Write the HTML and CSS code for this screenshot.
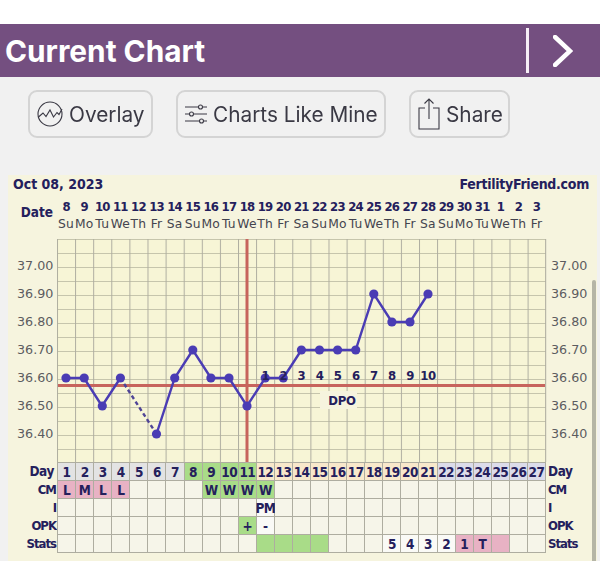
FILE: index.html
```html
<!DOCTYPE html>
<html lang="en">
<head>
<meta charset="utf-8">
<title>Current Chart</title>
<link rel="stylesheet" href="styles.css">
</head>
<body>
<div class="status"></div>
<header class="header">
  <h1 class="title">Current Chart</h1>
  <div class="divider"></div>
  <svg class="chevron" width="20" height="32" viewBox="0 0 20 32"><path d="M2 2 L17 16 L2 30"/></svg>
</header>
<nav class="toolbar">
  <button class="btn btn-overlay">
    <svg class="icon" width="26" height="28" viewBox="0 0 26 28"><circle cx="13" cy="14" r="12"/><path d="M1.5 17 L6 13 L9 16.5 L13 10 L16.5 17 L20 12.5 L22 14.5 L25 9"/></svg>
    Overlay
  </button>
  <button class="btn btn-charts">
    <svg class="icon" width="24" height="24" viewBox="0 0 24 24"><path d="M1 5 H14 M19 5 H23 M1 12 H5 M10 12 H23 M1 19 H15 M20 19 H23"/><circle cx="16.500" cy="5" r="2"/><circle cx="7.500" cy="12" r="2"/><circle cx="17.500" cy="19" r="2"/></svg>
    Charts Like Mine
  </button>
  <button class="btn btn-share">
    <svg class="icon" width="22" height="32" viewBox="0 0 22 32"><path d="M7 10 H1 V31 H21 V10 H15 M11 21 V1 M6.500 5.500 L11 1 L15.500 5.500"/></svg>
    Share
  </button>
</nav>
<main class="panel">
  <div class="panel-top"><span>Oct 08, 2023</span><span class="site">FertilityFriend.com</span></div>
  <div class="dates">
    <div class="date-label">Date</div>
    <b>8</b><b>9</b><b>10</b><b>11</b><b>12</b><b>13</b><b>14</b><b>15</b><b>16</b><b>17</b><b>18</b><b>19</b><b>20</b><b>21</b><b>22</b><b>23</b><b>24</b><b>25</b><b>26</b><b>27</b><b>28</b><b>29</b><b>30</b><b>31</b><b>1</b><b>2</b><b>3</b>
    <i>Su</i><i>Mo</i><i>Tu</i><i>We</i><i>Th</i><i>Fr</i><i>Sa</i><i>Su</i><i>Mo</i><i>Tu</i><i>We</i><i>Th</i><i>Fr</i><i>Sa</i><i>Su</i><i>Mo</i><i>Tu</i><i>We</i><i>Th</i><i>Fr</i><i>Sa</i><i>Su</i><i>Mo</i><i>Tu</i><i>We</i><i>Th</i><i>Fr</i>
  </div>
  <svg class="plot" width="589" height="223" viewBox="8 239 589 223">
    <defs>
      <pattern id="cellgrid" x="57" y="239" width="18.1" height="14" patternUnits="userSpaceOnUse">
        <path class="gridline-h" d="M0 0.500 H18.100"/>
        <path class="gridline" d="M0.500 0 V14"/>
      </pattern>
    </defs>
    <rect class="plot-bg" x="57" y="239" width="489" height="223"/>
    <rect x="57" y="239" width="489" height="223" fill="url(#cellgrid)"/>
    <path class="gridline" d="M545.700 239 V462"/>
    <g class="axis">
      <text x="17" y="270">37.00</text><text x="17" y="298">36.90</text><text x="17" y="326">36.80</text><text x="17" y="354">36.70</text><text x="17" y="382">36.60</text><text x="17" y="410">36.50</text><text x="17" y="438">36.40</text>
      <text x="551" y="270">37.00</text><text x="551" y="298">36.90</text><text x="551" y="326">36.80</text><text x="551" y="354">36.70</text><text x="551" y="382">36.60</text><text x="551" y="410">36.50</text><text x="551" y="438">36.40</text>
    </g>
    <path class="redline" d="M58 385.500 H545 M247 239 V462"/>
    <path class="temp" d="M66 378 H84 L102 406 L120.400 378"/>
    <path class="temp" d="M156.500 434 L174.700 378 L192.800 350 L210.900 378 H229 L247 406 L265.200 378 H283.300 L301.400 350 H355.700 L373.800 294 L391.900 322 H410 L428 294"/>
    <path class="temp-dash" d="M120.400 378 L156.500 434"/>
    <g class="dots">
      <circle cx="66" cy="378"/><circle cx="84.200" cy="378"/><circle cx="102.300" cy="406"/><circle cx="120.400" cy="378"/><circle cx="156.500" cy="434"/><circle cx="174.700" cy="378"/><circle cx="192.800" cy="350"/><circle cx="210.900" cy="378"/><circle cx="229" cy="378"/><circle cx="247" cy="406"/><circle cx="265.200" cy="378"/><circle cx="283.300" cy="378"/><circle cx="301.400" cy="350"/><circle cx="319.500" cy="350"/><circle cx="337.600" cy="350"/><circle cx="355.700" cy="350"/><circle cx="373.800" cy="294"/><circle cx="391.900" cy="322"/><circle cx="410" cy="322"/><circle cx="428" cy="294"/>
    </g>
    <g class="dpo">
      <text x="265.200" y="380">1</text><text x="283.300" y="380">2</text><text x="301.400" y="380">3</text><text x="319.500" y="380">4</text><text x="337.600" y="380">5</text><text x="355.700" y="380">6</text><text x="373.800" y="380">7</text><text x="391.900" y="380">8</text><text x="410" y="380">9</text><text x="428" y="380">10</text>
    </g>
    <rect class="dpo-box" x="320" y="391" width="37" height="18"/>
    <text class="dpo-label" x="342" y="405">DPO</text>
  </svg>
  <div class="table">
    <div class="labels labels-left"><span class="lab-day">Day</span><span>CM</span><span>I</span><span>OPK</span><span>Stats</span></div>
    <div class="cells">
      <div class="grey">1</div><div class="grey">2</div><div class="grey">3</div><div class="grey">4</div><div class="grey">5</div><div class="grey">6</div><div class="grey">7</div><div class="green">8</div><div class="green">9</div><div class="green">10</div><div class="green">11</div><div class="peach">12</div><div class="peach">13</div><div class="peach">14</div><div class="peach">15</div><div class="peach">16</div><div class="peach">17</div><div class="peach">18</div><div class="peach">19</div><div class="peach">20</div><div class="peach">21</div><div class="lav">22</div><div class="lav">23</div><div class="lav">24</div><div class="lav">25</div><div class="lav">26</div><div class="lav">27</div>

      <div class="pink">L</div><div class="pink">M</div><div class="pink">L</div><div class="pink">L</div><div></div><div></div><div></div><div></div><div class="green">W</div><div class="green">W</div><div class="green">W</div><div class="green">W</div><div></div><div></div><div></div><div></div><div></div><div></div><div></div><div></div><div></div><div></div><div></div><div></div><div></div><div></div><div></div>

      <div></div><div></div><div></div><div></div><div></div><div></div><div></div><div></div><div></div><div></div><div></div><div class="white">PM</div><div></div><div></div><div></div><div></div><div></div><div></div><div></div><div></div><div></div><div></div><div></div><div></div><div></div><div></div><div></div>

      <div></div><div></div><div></div><div></div><div></div><div></div><div></div><div></div><div></div><div></div><div class="green">+</div><div class="white">-</div><div></div><div></div><div></div><div></div><div></div><div></div><div></div><div></div><div></div><div></div><div></div><div></div><div></div><div></div><div></div>

      <div></div><div></div><div></div><div></div><div></div><div></div><div></div><div></div><div></div><div></div><div></div><div class="green"></div><div class="green"></div><div class="green"></div><div class="green"></div><div></div><div></div><div></div><div class="white">5</div><div class="white">4</div><div class="white">3</div><div class="white">2</div><div class="pink">1</div><div class="pink">T</div><div class="pink"></div><div></div><div></div>
    </div>
    <div class="labels labels-right"><span class="lab-day">Day</span><span>CM</span><span>I</span><span>OPK</span><span>Stats</span></div>
  </div>
  <div class="scrollbar"></div>
</main>
</body>
</html>
```
FILE: styles.css
```css
* { box-sizing: border-box; }
html, body { margin: 0; padding: 0; }
body {
  width: 600px;
  height: 561px;
  overflow: hidden;
  background: #f1f1f1;
  font-family: Inter, "Liberation Sans", sans-serif;
  filter: blur(0.35px);
}
.status { height: 24px; background: #fff; }
.header {
  height: 53px;
  background: #744f80;
  display: flex;
  align-items: center;
  padding-left: 5px;
}
.title {
  margin: 0;
  flex: 1;
  color: #fff;
  font-size: 29.8px;
  font-weight: 700;
}
.divider { width: 3px; height: 45px; background: #f6eef6; margin-right: 24px; }
.chevron { margin-right: 27px; }
.chevron path { fill: none; stroke: #fff; stroke-width: 4.5; stroke-linecap: round; }
.toolbar {
  height: 98px;
  display: flex;
  align-items: flex-start;
  gap: 23px;
  padding: 13px 0 0 28px;
}
.btn {
  height: 48px;
  display: flex;
  align-items: center;
  gap: 6px;
  border: 2px solid #d4d4d4;
  border-radius: 9px;
  background: #f1f1f1;
  color: #3a3944;
  font-family: Inter, "Liberation Sans", sans-serif;
  font-size: 20.8px;
  padding: 0;
  white-space: nowrap;
}
.btn-overlay { width: 125px; padding-left: 7px; }
.btn-charts { width: 210px; padding-left: 6px; gap: 5px; }
.btn-share { width: 101px; padding-left: 7px; }
.icon { flex: none; fill: none; stroke: #3a3944; stroke-width: 1.1; }
.panel {
  position: relative;
  height: 386px;
  margin-left: 8px;
  width: 589px;
  background: #f6f4de;
  color: #24205c;
  font-family: "DejaVu Sans", sans-serif;
}
.panel-top {
  height: 18px;
  padding: 0 8px 0 5px;
  display: flex;
  justify-content: space-between;
  align-items: center;
  font-size: 14px;
  font-weight: 700;
  font-stretch: condensed;
}
.site { letter-spacing: -0.28px; }
.dates {
  margin-top: 5px;
  display: grid;
  grid-template-columns: 49px repeat(27, 18.1px);
  grid-template-rows: 17px 17px;
  height: 41px;
}
.dates b, .dates i {
  display: flex;
  justify-content: center;
  align-items: center;
  white-space: nowrap;
}
.dates b { font-size: 13px; font-weight: 700; font-stretch: condensed; letter-spacing: -0.8px; }
.dates i { font-size: 12.3px; font-style: normal; color: #44444f; letter-spacing: 0.2px; }
.date-label {
  grid-row: 1 / 3;
  display: flex;
  justify-content: flex-end;
  align-items: center;
  padding: 0 4px 6px 0;
  font-size: 13.5px;
  font-weight: 700;
  font-stretch: condensed;
}
.plot { display: block; }
.plot-bg { fill: #f7f5d6; }
.gridline { fill: none; stroke: #aeada0; stroke-width: 1; }
.gridline-h { fill: none; stroke: #c6c5ac; stroke-width: 1; }
.axis text { font-size: 12.7px; fill: #5c5c60; }
.redline { fill: none; stroke: #c7645c; stroke-width: 3; }
.temp { fill: none; stroke: #4a3cb4; stroke-width: 2.4; }
.temp-dash { fill: none; stroke: #4f4496; stroke-width: 2.4; stroke-dasharray: 4 3; }
.dots circle { r: 4.6px; fill: #4a3cb4; }
.dpo text { font-size: 13px; font-weight: 700; font-stretch: condensed; fill: #24205c; text-anchor: middle; letter-spacing: -0.5px; }
.dpo-box { fill: #f6f4de; }
.dpo-label { font-size: 13px; font-weight: 700; fill: #24205c; text-anchor: middle; font-stretch: condensed; letter-spacing: -0.3px; }
.table {
  display: grid;
  grid-template-columns: 49px 489px auto;
}
.cells {
  display: grid;
  grid-template-columns: repeat(27, 1fr);
  grid-auto-rows: 17px;
  gap: 1px;
  padding: 1px;
  background: #aeada0;
  color: #24205c;
  font-size: 13.5px;
  font-weight: 700;
  font-stretch: condensed;
}
.cells div {
  background: #f6f5e9;
  display: flex;
  align-items: center;
  justify-content: center;
  white-space: nowrap;
  letter-spacing: -0.6px;
  min-width: 0;
}
.cells .grey { background: #e3e3e3; }
.cells .green { background: #a9dc88; }
.cells .peach { background: #f8e8cb; }
.cells .lav { background: #dcdcea; }
.cells .pink { background: #e8b2c4; }
.cells .white { background: #fafaf6; }
.labels {
  display: grid;
  grid-auto-rows: 18px;
  font-size: 13px;
  font-weight: 700;
  font-stretch: condensed;
  letter-spacing: -1px;
  align-items: center;
}
.labels-left { text-align: right; padding-right: 1px; }
.labels-right { padding-left: 2px; }
.lab-day { font-size: 13.5px; letter-spacing: -0.4px; }
.labels-left .lab-day { padding-right: 2px; }
.scrollbar {
  position: absolute;
  right: 1px;
  top: 105px;
  bottom: 0;
  width: 4px;
  border-radius: 2px 2px 0 0;
  background: #b5b5a6;
}
```
